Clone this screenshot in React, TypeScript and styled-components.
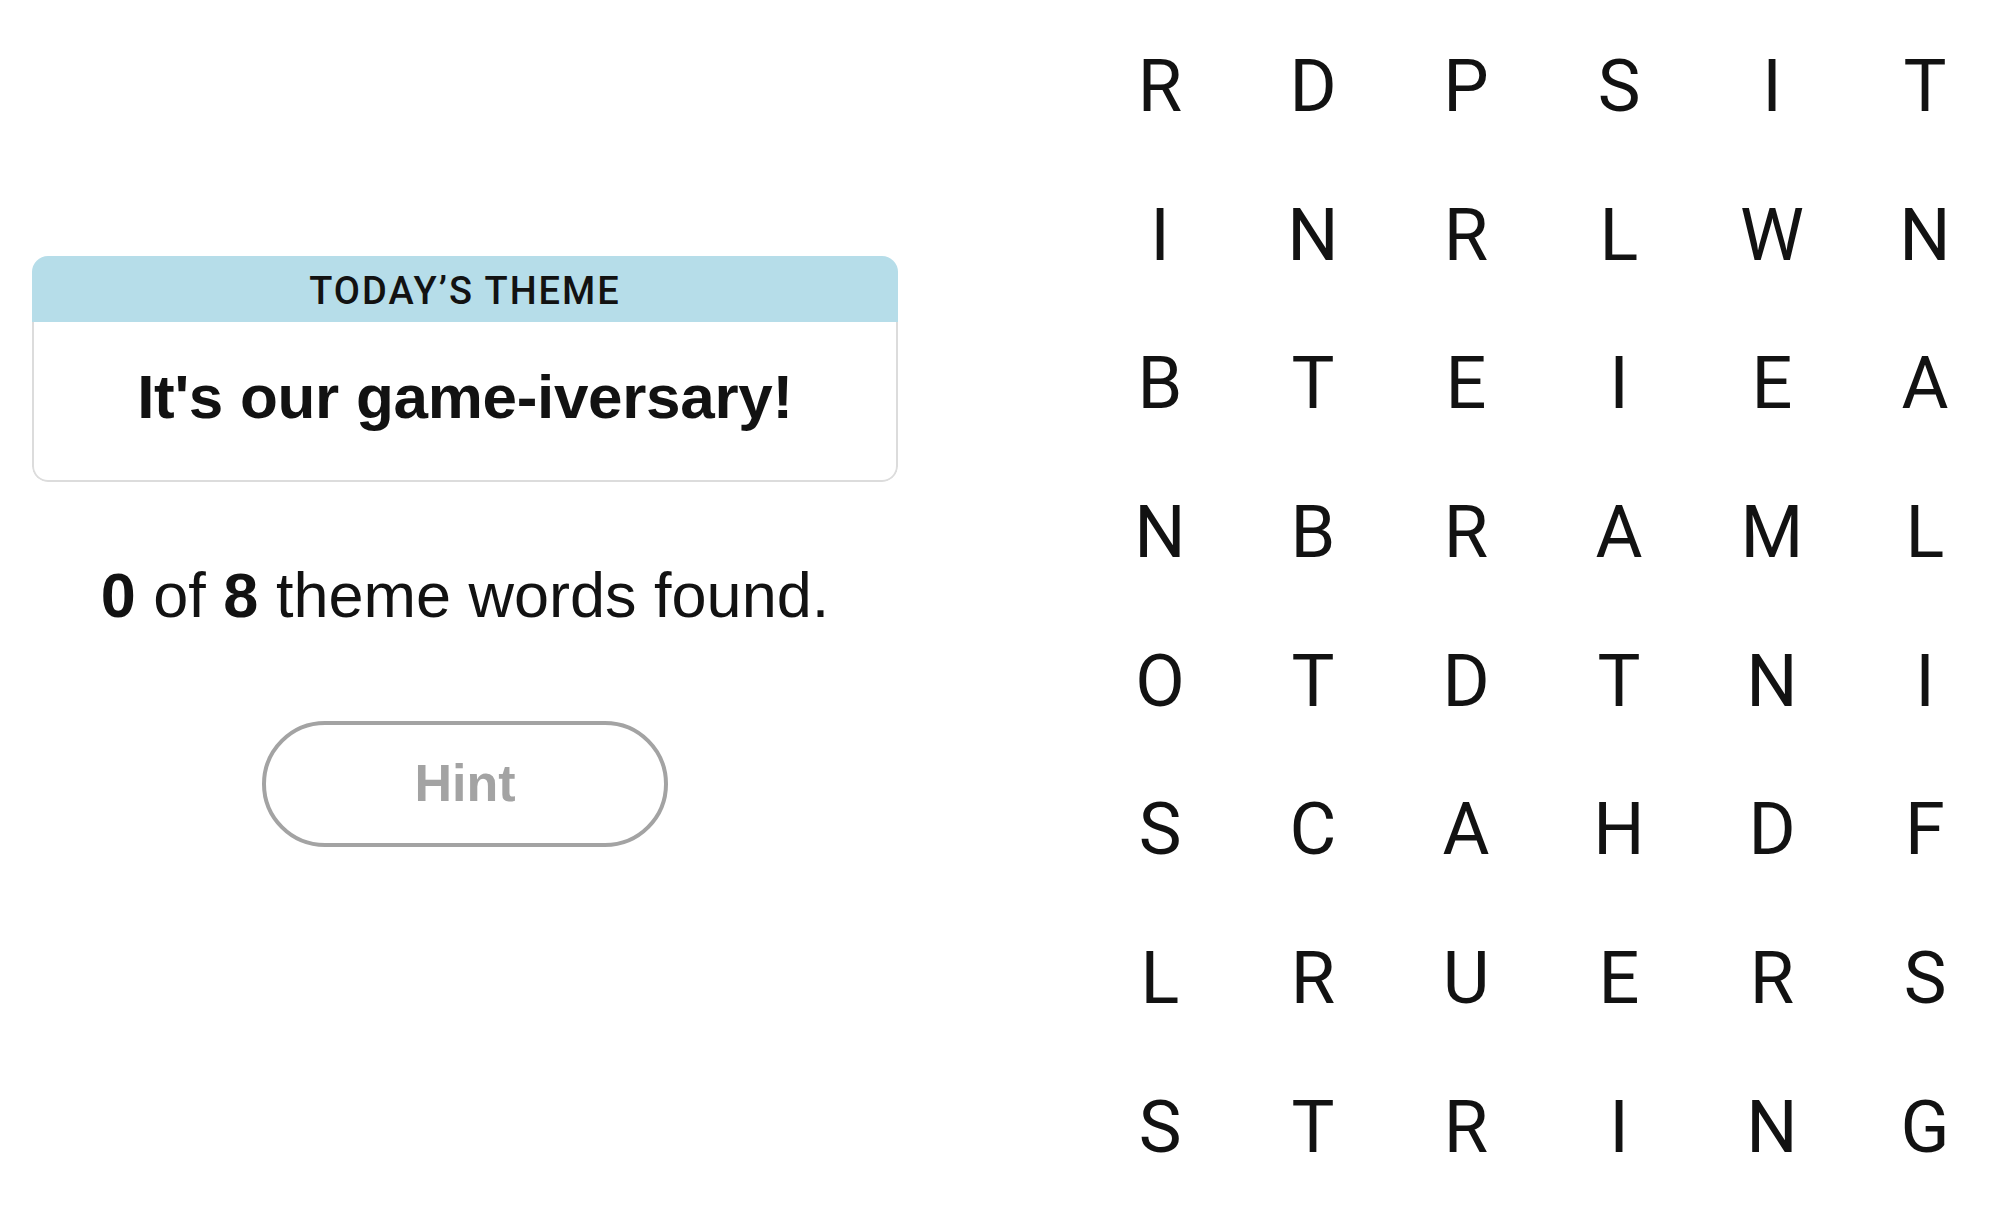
import React from "react";
import styled, { createGlobalStyle } from "styled-components";

const GlobalStyle = createGlobalStyle`
  html, body {
    margin: 0;
    padding: 0;
    background: #ffffff;
    overflow: hidden;
  }
  body {
    font-family: "Liberation Sans", Arial, sans-serif;
    color: #121212;
  }
`;

const Page = styled.div`
  display: flex;
  flex-direction: row;
  align-items: flex-start;
  width: 2000px;
  height: 1212px;
`;

const LeftPanel = styled.section`
  width: 930px;
  box-sizing: border-box;
  padding: 256px 32px 0;
  display: flex;
  flex-direction: column;
  align-items: center;
`;

const ThemeCard = styled.div`
  width: 866px;
  display: flex;
  flex-direction: column;
  border-radius: 16px;
  overflow: hidden;
`;

const ThemeHeader = styled.div`
  height: 66px;
  background: #b6dde9;
  display: flex;
  align-items: center;
  justify-content: center;
  font-family: Roboto, "Liberation Sans", sans-serif;
  font-weight: 500;
  font-size: 38px;
  letter-spacing: 2px;
  color: #121212;
  text-transform: uppercase;
  padding-top: 3px;
  box-sizing: border-box;
`;

const ThemeBody = styled.div`
  border: 2px solid #dcdcdc;
  border-top: none;
  border-radius: 0 0 16px 16px;
  padding: 38px 0 46px;
  text-align: center;
`;

const ThemeTitle = styled.h1`
  margin: 0;
  font-family: "Liberation Sans", Arial, sans-serif;
  font-weight: 700;
  font-size: 62px;
  line-height: 1.2;
  letter-spacing: -0.3px;
  color: #121212;
`;

const Progress = styled.p`
  margin: 76px 0 0;
  font-family: "Liberation Sans", Arial, sans-serif;
  font-size: 63px;
  line-height: 1.2;
  color: #121212;
  text-align: center;

  b {
    font-weight: 700;
  }
`;

const HintButton = styled.button`
  margin-top: 87px;
  width: 406px;
  height: 126px;
  box-sizing: border-box;
  border: 4px solid #a3a3a3;
  border-radius: 63px;
  background: #ffffff;
  color: #a3a3a3;
  font-family: "Liberation Sans", Arial, sans-serif;
  font-weight: 700;
  font-size: 52px;
  display: flex;
  align-items: center;
  justify-content: center;
  padding: 0 0 2px;
  cursor: default;
`;

const Board = styled.div`
  margin-left: 165px;
  margin-top: 27px;
  display: grid;
  grid-template-columns: repeat(6, 130px);
  grid-auto-rows: 120px;
  column-gap: 23px;
  row-gap: 28.7px;
`;

const Cell = styled.div`
  display: flex;
  align-items: center;
  justify-content: center;
  font-family: Roboto, "Liberation Sans", sans-serif;
  font-weight: 400;
  font-size: 72px;
  line-height: 1;
  color: #121212;
  user-select: none;
`;

const rows = [
  "RDPSIT",
  "INRLWN",
  "BTEIEA",
  "NBRAML",
  "OTDTNI",
  "SCAHDF",
  "LRUERS",
  "STRING",
];

export default function App() {
  return (
    <>
      <GlobalStyle />
      <Page>
        <LeftPanel>
          <ThemeCard>
            <ThemeHeader>Today’s Theme</ThemeHeader>
            <ThemeBody>
              <ThemeTitle>It's our game-iversary!</ThemeTitle>
            </ThemeBody>
          </ThemeCard>
          <Progress>
            <b>0</b> of <b>8</b> theme words found.
          </Progress>
          <HintButton type="button">Hint</HintButton>
        </LeftPanel>
        <Board>
          {rows.flatMap((row, r) =>
            row.split("").map((ch, c) => <Cell key={`${r}-${c}`}>{ch}</Cell>)
          )}
        </Board>
      </Page>
    </>
  );
}
